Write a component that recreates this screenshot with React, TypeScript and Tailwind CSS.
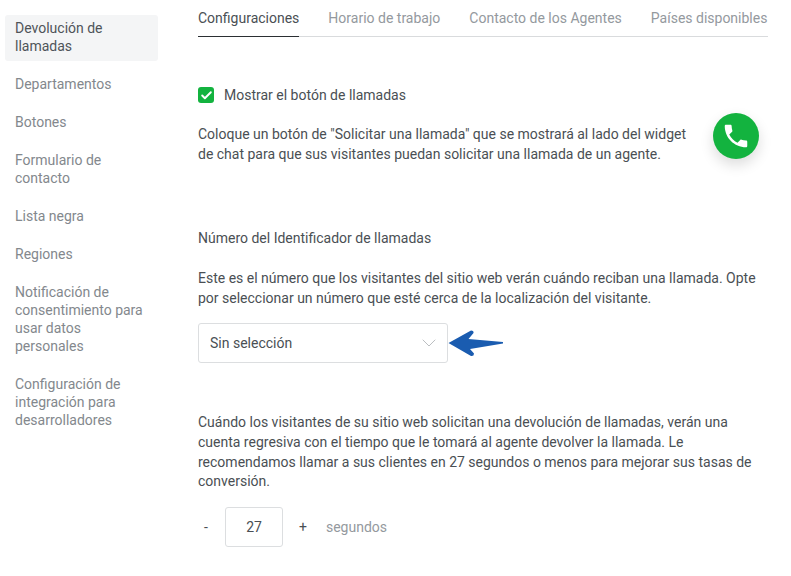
import { Check, ChevronDown } from 'lucide-react';

const navItems = [
  { id: 'callback', label: <>Devolución de<br />llamadas</>, active: true },
  { id: 'departments', label: 'Departamentos' },
  { id: 'buttons', label: 'Botones' },
  { id: 'form', label: <>Formulario de<br />contacto</> },
  { id: 'blacklist', label: 'Lista negra' },
  { id: 'regions', label: 'Regiones' },
  { id: 'consent', label: <>Notificación de<br />consentimiento para<br />usar datos<br />personales</> },
  { id: 'dev', label: <>Configuración de<br />integración para<br />desarrolladores</> },
];

const tabs = ['Configuraciones', 'Horario de trabajo', 'Contacto de los Agentes', 'Países disponibles'];

export default function App() {
  return (
    <div className="w-[791px] h-[576px] overflow-hidden bg-white flex font-['Roboto',sans-serif] text-[14px] leading-[18px] text-[#4a4f54]">
      {/* Sidebar */}
      <aside className="w-[198px] shrink-0 pt-[15px] pl-[5px]">
        <ul className="w-[153px] flex flex-col gap-[4px]">
          {navItems.map((item) => (
            <li
              key={item.id}
              className={
                item.active
                  ? 'px-[10px] py-[4px] mb-[2px] h-[46px] rounded-[3px] bg-[#f4f5f6] text-[#4f5459]'
                  : 'px-[10px] py-[8px] text-[#83888d]'
              }
            >
              {item.label}
            </li>
          ))}
        </ul>
      </aside>

      {/* Content */}
      <main className="w-[570px] shrink-0">
        <nav className="flex gap-[29px] h-[37px] border-b border-[#d9dbdd]">
          {tabs.map((tab, i) => (
            <div
              key={tab}
              className={
                i === 0
                  ? 'h-[37px] pt-[9px] border-b border-[#2b2f33] text-[#4a4f54] whitespace-nowrap'
                  : 'pt-[9px] text-[#94999e] whitespace-nowrap'
              }
            >
              {tab}
            </div>
          ))}
        </nav>

        <label className="mt-[49px] flex items-center gap-[10px] h-[18px]">
          <span className="w-[16px] h-[16px] rounded-[3px] bg-[#13b33f] flex items-center justify-center">
            <Check className="w-[13px] h-[13px] text-white" strokeWidth={3.5} />
          </span>
          Mostrar el botón de llamadas
        </label>

        <div className="mt-[21px] flex justify-between">
          <p className="w-[505px] leading-[19.6px]">
            Coloque un botón de "Solicitar una llamada" que se mostrará al lado del widget
            <br />
            de chat para que sus visitantes puedan solicitar una llamada de un agente.
          </p>
          <div className="w-[46px] h-[46px] -mt-[12px] mr-[9px] rounded-full bg-[#13b33f] shadow-[0_6px_14px_rgba(0,0,0,0.14)] flex items-center justify-center">
            <svg viewBox="0 0 24 24" className="w-[30px] h-[30px] fill-white">
              <path d="M6.6 10.8c1.4 2.8 3.8 5.1 6.6 6.6l2.2-2.2c.3-.3.7-.4 1-.2 1.1.4 2.3.6 3.6.6.6 0 1 .4 1 1V20c0 .6-.4 1-1 1C10.6 21 3 13.4 3 4c0-.6.4-1 1-1h3.5c.6 0 1 .4 1 1 0 1.3.2 2.5.6 3.6.1.3 0 .7-.2 1l-2.3 2.2z" />
            </svg>
          </div>
        </div>

        <h3 className="mt-[65px]">Número del Identificador de llamadas</h3>

        <p className="mt-[22px] leading-[19.6px]">
          Este es el número que los visitantes del sitio web verán cuándo reciban una llamada. Opte
          <br />
          por seleccionar un número que esté cerca de la localización del visitante.
        </p>

        <div className="mt-[15px] flex items-center">
          <div className="w-[250px] h-[40px] pl-[11px] pr-[6px] pb-[1px] rounded-[3px] border border-[#dcdee0] flex items-center justify-between">
            <span>Sin selección</span>
            <ChevronDown className="w-[24px] h-[24px] text-[#a9adb1]" strokeWidth={0.8} />
          </div>
          <svg viewBox="0 0 56 28" className="w-[56px] h-[28px]">
            <path
              d="M0.5 14 L23 1.5 Q26 1.5 25.5 4 L20.5 10 L55 13 L55 14.5 L22 20 L26 24.5 Q26 27.5 23 27 Z"
              fill="#1a5cb0"
            />
          </svg>
        </div>

        <p className="mt-[50px] leading-[19.6px]">
          Cuándo los visitantes de su sitio web solicitan una devolución de llamadas, verán una
          <br />
          cuenta regresiva con el tiempo que le tomará al agente devolver la llamada. Le
          <br />
          recomendamos llamar a sus clientes en 27 segundos o menos para mejorar sus tasas de
          <br />
          conversión.
        </p>

        <div className="mt-[15px] flex items-center h-[40px]">
          <span className="w-[16px] text-center">-</span>
          <div className="ml-[11px] w-[58px] h-[40px] rounded-[3px] border border-[#dcdee0] flex items-center justify-center">
            27
          </div>
          <span className="ml-[16px]">+</span>
          <span className="ml-[19px] text-[#94999e]">segundos</span>
        </div>
      </main>
    </div>
  );
}
